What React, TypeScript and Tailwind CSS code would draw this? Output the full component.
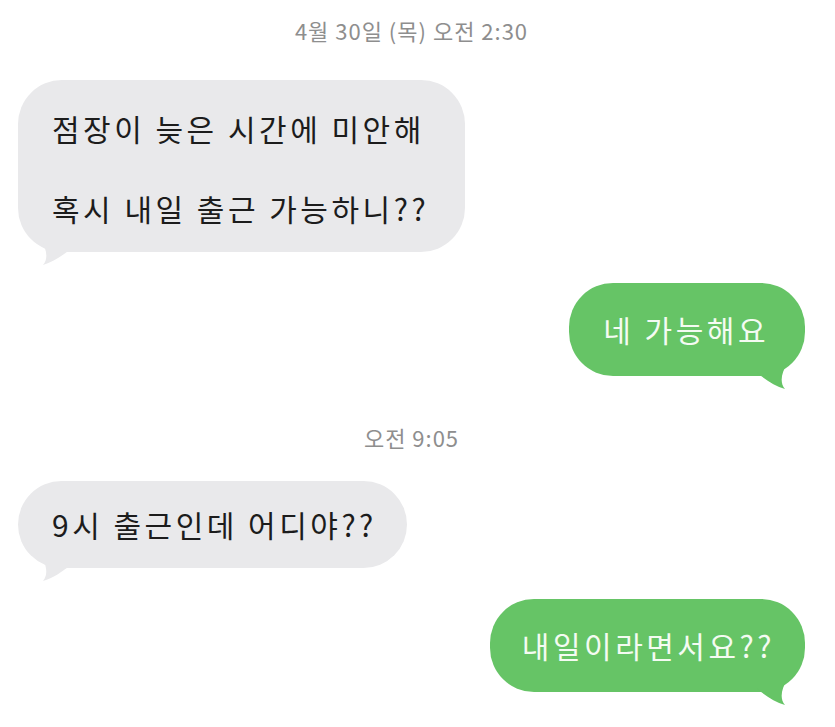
import React from "react";

const FONT = { fontFamily: '"Noto Sans CJK KR", "Noto Sans", sans-serif' };

// bubble tail, drawn for the left side and mirrored for the right
function Tail({ side }: { side: "left" | "right" }) {
  const left = side === "left";
  return (
    <svg
      className={`absolute bottom-[-16px] ${left ? "left-[20px]" : "right-[15px] -scale-x-100"}`}
      width="40"
      height="40"
      viewBox="0 0 40 40"
    >
      <path
        d="M3 0 L 3 12 C 8 20, 11 30, 5 37 C 15 34, 24 28, 34 20 L 34 0 Z"
        fill={left ? "#e9e9eb" : "#66c466"}
      />
    </svg>
  );
}

function Bubble({
  side,
  children,
  className = "",
}: {
  side: "left" | "right";
  children: React.ReactNode;
  className?: string;
}) {
  const color = side === "left" ? "bg-[#e9e9eb] text-[#1c1c1c]" : "bg-[#66c466] text-[#f4fbf2]";
  return (
    <div className={`relative rounded-[44px] text-[30px] tracking-[3.5px] ${color} ${className}`} style={FONT}>
      <Tail side={side} />
      <div className="relative">{children}</div>
    </div>
  );
}

export default function App() {
  return (
    <div className="w-[835px] h-[727px] bg-white overflow-hidden flex flex-col pl-[18px] pr-[30px]" style={FONT}>
      <div className="mt-[17px] text-center text-[22px] leading-[26px] tracking-[1px] text-[#8e8e8e]">4월 30일 (목) 오전 2:30</div>

      <div className="mt-[37px] self-start">
        <Bubble side="left" className="pl-[34px] pr-[36px] pt-[8px] pb-[4px] leading-[80px]">
          <div>점장이 늦은 시간에 미안해</div>
          <div>혹시 내일 출근 가능하니??</div>
        </Bubble>
      </div>

      <div className="mt-[31px] self-end">
        <Bubble side="right" className="pl-[34px] pr-[36px] py-[26px] leading-[41px]">
          네 가능해요
        </Bubble>
      </div>

      <div className="mt-[48px] text-center text-[22px] leading-[26px] tracking-[1px] text-[#8e8e8e]">오전 9:05</div>

      <div className="mt-[31px] self-start">
        <Bubble side="left" className="pl-[34px] pr-[30px] py-[23px] leading-[41px]">
          9시 출근인데 어디야??
        </Bubble>
      </div>

      <div className="mt-[31px] self-end">
        <Bubble side="right" className="pl-[32px] pr-[30px] py-[26px] leading-[41px]">
          내일이라면서요??
        </Bubble>
      </div>
    </div>
  );
}
